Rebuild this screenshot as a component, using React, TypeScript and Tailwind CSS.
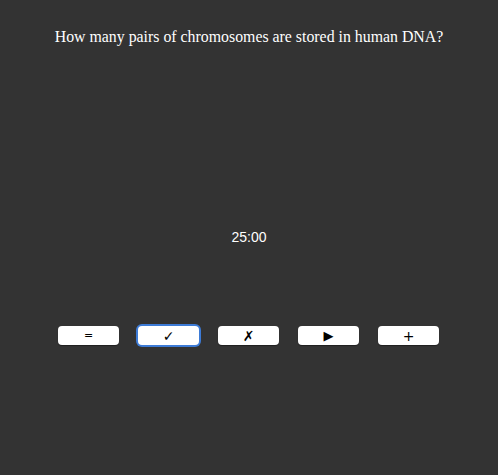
import React from 'react';

const buttons = [
  { label: '=', focused: false, cls: 'text-[11px] text-[#3a3a5a]' },
  { label: '✓', focused: true, cls: 'text-[14px] font-bold' },
  { label: '✗', focused: false, cls: 'text-[14px] font-bold' },
  { label: '▶', focused: false, cls: 'text-[13px]' },
  { label: '+', focused: false, cls: 'text-[14px]' },
];

export default function App() {
  return (
    <div className="flex h-[475px] w-full flex-col items-center bg-[#333333] text-white">
      {/* Question */}
      <h1 className="mt-[28px] font-['Liberation_Serif',serif] text-[15.85px] leading-[18px] font-normal">
        How many pairs of chromosomes are stored in human DNA?
      </h1>

      {/* Timer */}
      <div className="mt-[183px] font-['Liberation_Sans',sans-serif] text-[14px] leading-[16px]">
        25:00
      </div>

      {/* Controls */}
      <div className="mt-[81px] flex gap-[19px] self-stretch pl-[58px]">
        {buttons.map((b) => (
          <button
            key={b.label}
            className={
              'flex h-[19px] w-[61px] items-center justify-center rounded-[4px] bg-white font-["DejaVu_Sans",sans-serif] leading-none text-black shadow-[0_1px_1px_rgba(0,0,0,0.4)] ' +
              b.cls +
              (b.focused ? ' ring-[2px] ring-[#3d7bd6]' : '')
            }
          >
            {b.label}
          </button>
        ))}
      </div>
    </div>
  );
}
